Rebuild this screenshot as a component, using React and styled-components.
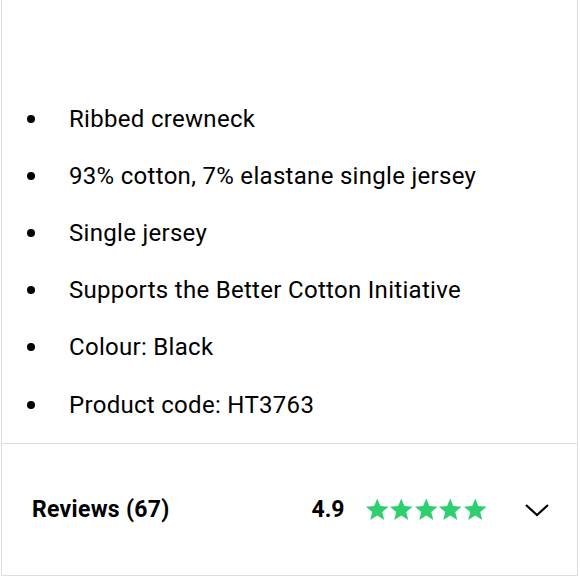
import React from "react";
import styled, { createGlobalStyle } from "styled-components";

const Global = createGlobalStyle`
  html, body { margin: 0; padding: 0; background: #fff; }
  body { font-family: "Roboto", "Liberation Sans", sans-serif; color: #000; }
`;

const Panel = styled.div`
  margin-left: 1px;
  width: 577px;
  border: 1px solid #dcdedf;
  border-top: none;
  box-sizing: border-box;
`;

const Details = styled.section`
  padding: 90px 0 10px;
  border-bottom: 1px solid #dcdedf;
`;

const List = styled.ul`
  list-style: none;
  margin: 0;
  padding: 0 0 0 25px;
`;

const Item = styled.li`
  display: flex;
  align-items: center;
  height: 57.2px;
  font-size: 24px;
  letter-spacing: 0.3px;
  font-weight: 400;
`;

const Bullet = styled.span`
  width: 8px;
  height: 8px;
  border-radius: 50%;
  background: #000;
  margin-right: 34px;
  flex: none;
`;

const ReviewsRow = styled.div`
  display: flex;
  align-items: center;
  height: 131px;
  padding: 0 28px 0 30px;
`;

const Title = styled.span`
  font-size: 23px;
  font-weight: 700;
  letter-spacing: 0.3px;
  flex: 1;
`;

const Score = styled.span`
  font-size: 23px;
  font-weight: 700;
  margin-right: 20px;
`;

const Stars = styled.span`
  display: flex;
  margin-right: 38px;
`;

const Chevron = styled.svg`
  width: 24px;
  height: 24px;
`;

const Star = () => (
  <svg width="24.5" height="23" viewBox="0 0 24 23">
    <path d="M12 0.5l3.1 7.6 8.2 0.6-6.3 5.3 2 8-7-4.4-7 4.4 2-8L0.7 8.7l8.2-0.6z" fill="#2ecf6f" />
  </svg>
);

const items = [
  "Ribbed crewneck",
  "93% cotton, 7% elastane single jersey",
  "Single jersey",
  "Supports the Better Cotton Initiative",
  "Colour: Black",
  "Product code: HT3763",
];

export default function App() {
  return (
    <>
      <Global />
      <Panel>
        <Details>
          <List>
            {items.map((t) => (
              <Item key={t}>
                <Bullet />
                {t}
              </Item>
            ))}
          </List>
        </Details>
        <ReviewsRow>
          <Title>Reviews (67)</Title>
          <Score>4.9</Score>
          <Stars>
            {[0, 1, 2, 3, 4].map((i) => (
              <Star key={i} />
            ))}
          </Stars>
          <Chevron viewBox="0 0 24 24" fill="none" stroke="#000" strokeWidth="2.2">
            <path d="M1 7l11 10 11-10" />
          </Chevron>
        </ReviewsRow>
      </Panel>
    </>
  );
}
